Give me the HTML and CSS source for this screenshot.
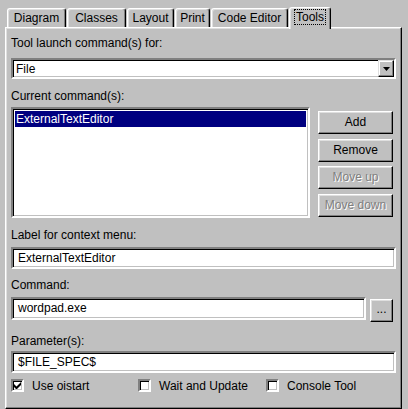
FILE: index.html
```html
<!DOCTYPE html>
<html lang="en">
<head>
    <meta charset="UTF-8">
    <title>Tools</title>
    <link rel="stylesheet" href="styles.css">
</head>
<body>
    <div class="tabs">
        <div class="tab t-diagram">Diagram</div>
        <div class="tab t-classes">Classes</div>
        <div class="tab t-layout">Layout</div>
        <div class="tab t-print">Print</div>
        <div class="tab t-code">Code Editor</div>
        <div class="tab active"><span class="focus">Tools</span></div>
    </div>

    <div class="panel">
        <div class="label first">Tool launch command(s) for:</div>
        <div class="field select">
            <span>File</span>
            <div class="drop">
                <svg width="7" height="4" viewBox="0 0 7 4"><path d="M0 0h7L3.5 4z" fill="#000"/></svg>
            </div>
        </div>

        <div class="label l2">Current command(s):</div>
        <div class="listrow">
            <div class="field list">
                <div class="item sel">ExternalTextEditor</div>
            </div>
            <div class="btns">
                <div class="btn">Add</div>
                <div class="btn">Remove</div>
                <div class="btn off">Move up</div>
                <div class="btn off">Move down</div>
            </div>
        </div>

        <div class="label l3">Label for context menu:</div>
        <div class="field input">ExternalTextEditor</div>

        <div class="label l4">Command:</div>
        <div class="cmdrow">
            <div class="field input cmd">wordpad.exe</div>
            <div class="btn dots">...</div>
        </div>

        <div class="label l5">Parameter(s):</div>
        <div class="field input param">$FILE_SPEC$</div>

        <div class="checks">
            <div class="check">
                <div class="box">
                    <svg width="7" height="7" viewBox="0 0 7 7"><path d="M0 2v3l2 2h1l4-4V0L2.5 4.5z" fill="#000"/></svg>
                </div>
                Use oistart
            </div>
            <div class="check"><div class="box"></div>Wait and Update</div>
            <div class="check"><div class="box"></div>Console Tool</div>
        </div>
    </div>
</body>
</html>
```

FILE: styles.css
```css
body {
    margin: 0;
    width: 408px;
    height: 409px;
    overflow: hidden;
    background-color: #c0c0c0;
    font-family: "Liberation Sans", Arial, sans-serif;
    font-size: 12px;
    color: #000;
}

/* tab strip */
.tabs {
    display: flex;
    align-items: flex-end;
    height: 19px;
    padding: 8px 0 0 7px;
}
.tab {
    box-sizing: border-box;
    height: 19px;
    line-height: 18px;
    text-align: center;
    margin-right: 1px;
    border: 1px solid;
    border-color: #fff #000 transparent #fff;
    border-bottom: none;
    border-radius: 3px 3px 0 0;
    box-shadow: inset -1px 0 #808080, inset 1px 1px #dfdfdf;
}
.t-diagram { width: 59px; }
.t-classes { width: 59px; }
.t-layout { width: 47px; }
.t-print { width: 35px; }
.t-code { width: 77px; }
.tab.active {
    position: relative;
    z-index: 1;
    width: 42px;
    height: 22px;
    line-height: 18px;
    margin: 0 0 -2px 0;
    background-color: #c0c0c0;
}
.focus {
    outline: 1px dotted #000;
    padding: 0 1px;
}

/* page panel */
.panel {
    box-sizing: border-box;
    width: 397px;
    height: 382px;
    margin-left: 5px;
    padding: 8px 5px 0 5px;
    border: 1px solid;
    border-color: #fff #000 #000 #fff;
    box-shadow: inset -1px -1px #808080, inset 1px 1px #dfdfdf;
}
.label {
    height: 15px;
    line-height: 15px;
}
.l2 { margin-top: 10px; }
.l3 { margin-top: 10px; }
.l4 { margin-top: 9px; }
.l5 { margin-top: 12px; }

/* sunken boxes */
.field {
    box-sizing: border-box;
    background-color: #fff;
    border: 2px solid;
    border-color: #808080 #fff #fff #808080;
    box-shadow: inset 1px 1px #000, inset -1px -1px #c0c0c0;
}
.select {
    display: flex;
    align-items: center;
    justify-content: space-between;
    height: 21px;
    margin-top: 7px;
    padding: 0 0 0 3px;
}
.drop {
    box-sizing: border-box;
    display: flex;
    align-items: center;
    justify-content: center;
    width: 16px;
    height: 17px;
    background-color: #c0c0c0;
    border: 1px solid;
    border-color: #dfdfdf #000 #000 #dfdfdf;
    box-shadow: inset -1px -1px #808080, inset 1px 1px #fff;
}
.input {
    height: 22px;
    line-height: 18px;
    padding-left: 5px;
    margin-top: 4px;
}
.param { margin-top: 2px; }

/* list and buttons */
.listrow {
    display: flex;
    margin-top: 3px;
}
.list {
    flex: 1;
    height: 111px;
    padding: 2px;
}
.item {
    height: 16px;
    line-height: 16px;
    padding-left: 1px;
}
.item.sel {
    background-color: #000080;
    color: #fff;
}
.btns {
    display: flex;
    flex-direction: column;
    gap: 4.5px;
    width: 75px;
    margin: 0 3px 0 8px;
    padding-top: 4px;
}
.btn {
    box-sizing: border-box;
    height: 23px;
    line-height: 21px;
    text-align: center;
    border: 1px solid;
    border-color: #fff #000 #000 #fff;
    box-shadow: inset -1px -1px #808080, inset 1px 1px #dfdfdf;
}
.btn.off {
    color: #808080;
    text-shadow: 1px 1px #fff;
}

/* command row */
.cmdrow {
    display: flex;
    align-items: flex-start;
    margin-top: 4px;
}
.cmd {
    flex: 1;
    height: 23px;
    line-height: 19px;
    margin-top: 0;
}
.dots {
    width: 23px;
    margin: 2px 3px 0 4px;
    line-height: 19px;
}

/* checkboxes */
.checks {
    display: grid;
    grid-template-columns: 127px 128px auto;
    margin-top: 5px;
}
.check {
    display: flex;
    align-items: center;
    gap: 8px;
    height: 15px;
}
.box {
    box-sizing: border-box;
    display: flex;
    align-items: center;
    justify-content: center;
    width: 13px;
    height: 13px;
    background-color: #fff;
    border: 2px solid;
    border-color: #808080 #fff #fff #808080;
    box-shadow: inset 1px 1px #000, inset -1px -1px #c0c0c0;
}
```
